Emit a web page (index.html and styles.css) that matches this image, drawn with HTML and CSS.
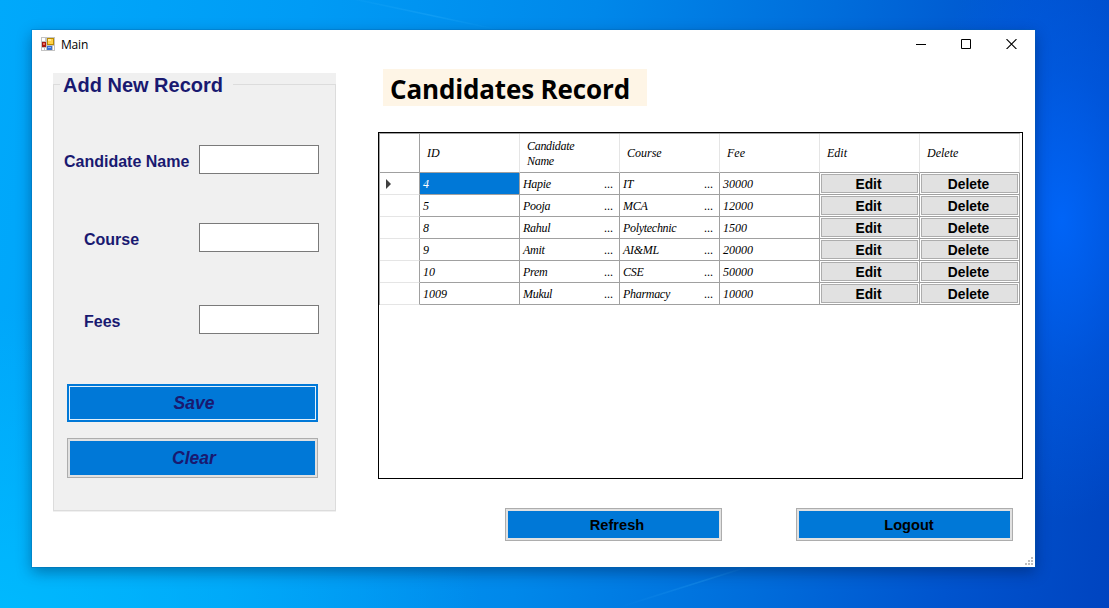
FILE: index.html
```html
<!DOCTYPE html>
<html lang="en">
<head>
<meta charset="utf-8">
<title>Main</title>
<link rel="stylesheet" href="styles.css">
</head>
<body>
<svg class="wallpaper" viewBox="0 0 1109 608" aria-hidden="true">
  <defs>
    <linearGradient id="ray" x1="0" x2="1"><stop offset="0" stop-color="#4bc0ff" stop-opacity="0"/><stop offset=".6" stop-color="#4bc0ff" stop-opacity=".2"/><stop offset="1" stop-color="#4bc0ff" stop-opacity="0"/></linearGradient>
  </defs>
  <path d="M330-6L500 30" stroke="url(#ray)" stroke-width="1.5"/>
  <path d="M620 607L760 563" stroke="url(#ray)" stroke-width="1.5"/>
</svg>
<main class="window">
  <header class="titlebar">
    <svg class="app-icon" width="14" height="14" viewBox="0 0 14 14">
      <path fill="#c3c3c3" d="M0 0h14v14H0z"/>
      <path fill="#fff" d="M1 1h3v3H1zM1 11h2v2H1zM4 11h1v2H4zM12 9h1v4h-1z"/>
      <path fill="#a51a12" d="M1 5h4v5H1z"/><path fill="#ef6a5a" d="M2 6h2v2H2z"/>
      <path fill="#b98a00" d="M6 1h7v7H6z"/><path fill="#ffd24a" d="M7 2h5v5H7z"/><path fill="#ffe99a" d="M7 2h3v2H7z"/>
      <path fill="#3a6fd0" d="M6 9h5v4H6z"/><path fill="#86b4f8" d="M7 10h3v1H7z"/>
    </svg>
    <span class="title">Main</span>
    <nav class="controls">
      <svg width="10" height="10" viewBox="0 0 10 10"><path d="M0 5h10v1H0z"/></svg>
      <svg width="10" height="10" viewBox="0 0 10 10"><path d="M.5.5h9v9h-9z" fill="none" stroke="#000"/></svg>
      <svg width="11" height="10" viewBox="0 0 11 10"><path d="M.5.1l10 10M10.5.1l-10 10" fill="none" stroke="#000" stroke-width="1.1"/></svg>
    </nav>
  </header>
  <div class="content">
    <section class="panel">
      <fieldset class="group">
        <legend>Add New Record</legend>
        <div class="field"><label class="wide" for="name">Candidate Name</label><input id="name"></div>
        <div class="field"><label for="course">Course</label><input id="course"></div>
        <div class="field last"><label for="fees">Fees</label><input id="fees"></div>
        <button class="btn form-btn focused">Save</button>
        <button class="btn form-btn clear">Clear</button>
      </fieldset>
    </section>
    <section class="records">
      <h1>Candidates Record</h1>
      <div class="grid-view">
        <div class="row head"><span></span><span>ID</span><span class="text">Candidate Name</span><span>Course</span><span>Fee</span><span>Edit</span><span>Delete</span></div>
        <div class="row"><span class="marker"><i></i></span><span class="selected">4</span><span class="text">Hapie<b>...</b></span><span class="text">IT<b>...</b></span><span>30000</span><span class="action"><button>Edit</button></span><span class="action"><button>Delete</button></span></div>
        <div class="row"><span></span><span>5</span><span class="text">Pooja<b>...</b></span><span class="text">MCA<b>...</b></span><span>12000</span><span class="action"><button>Edit</button></span><span class="action"><button>Delete</button></span></div>
        <div class="row"><span></span><span>8</span><span class="text">Rahul<b>...</b></span><span class="text">Polytechnic<b>...</b></span><span>1500</span><span class="action"><button>Edit</button></span><span class="action"><button>Delete</button></span></div>
        <div class="row"><span></span><span>9</span><span class="text">Amit<b>...</b></span><span class="text">AI&amp;ML<b>...</b></span><span>20000</span><span class="action"><button>Edit</button></span><span class="action"><button>Delete</button></span></div>
        <div class="row"><span></span><span>10</span><span class="text">Prem<b>...</b></span><span class="text">CSE<b>...</b></span><span>50000</span><span class="action"><button>Edit</button></span><span class="action"><button>Delete</button></span></div>
        <div class="row"><span></span><span>1009</span><span class="text">Mukul<b>...</b></span><span class="text">Pharmacy<b>...</b></span><span>10000</span><span class="action"><button>Edit</button></span><span class="action"><button>Delete</button></span></div>
      </div>
      <div class="footer"><button class="btn">Refresh</button><button class="btn logout">Logout</button></div>
    </section>
  </div>
  <svg class="grip" width="8" height="8" viewBox="0 0 8 8"><path fill="#bfbfbf" d="M6 0h2v2H6zM3 3h2v2H3zM6 3h2v2H6zM0 6h2v2H0zM3 6h2v2H3zM6 6h2v2H6z"/></svg>
</main>
</body>
</html>
```
FILE: styles.css
```css
* { box-sizing: border-box; }

body {
  margin: 0;
  height: 608px;
  overflow: hidden;
  padding: 30px 0 0 32px;
  font-family: "Liberation Sans", Arial, sans-serif;
  color: #000;
  background:
    radial-gradient(ellipse 150px 300px at 1062px 220px, rgba(0, 104, 255, .85), rgba(0, 98, 245, .4) 50%, transparent),
    radial-gradient(ellipse 480px 300px at 0 608px, rgba(0, 190, 255, .8), transparent),
    linear-gradient(98deg, #00a9fb 0, #009bf5 26%, #0088ea 50%, #006ddb 70%, #0054ce 86%, #0044c0 100%);
}

.wallpaper { position: absolute; inset: 0; width: 1109px; height: 608px; }

.window {
  position: relative;
  width: 1003px;
  height: 537px;
  background: #fff;
  box-shadow: 0 0 0 1px rgba(0, 100, 170, .3), 0 5px 14px rgba(0, 20, 60, .4);
}

.titlebar { display: flex; align-items: center; height: 29px; padding: 0 18px 0 9px; }
.app-icon { margin-top: -1px; }
.title { margin-left: 6px; font: 12px "Open Sans", "Noto Sans", sans-serif; letter-spacing: -.2px; }
.controls { display: flex; align-items: center; gap: 35px; margin: -1px 0 0 auto; }

.content { display: flex; padding: 10px 12px 0 21px; }

.panel { width: 283px; height: 439px; margin-top: 4px; background: #f0f0f0; }
.group { height: 438px; margin: 0; padding: 0; border: 1px solid #dcdcdc; }
.group legend {
  width: 173px;
  height: 23px;
  margin-left: 6px;
  padding: 0 0 0 3px;
  font-size: 20px;
  font-weight: bold;
  line-height: 24px;
  color: #191970;
  white-space: nowrap;
}
.field { display: flex; height: 29px; margin: 49px 16px 0 30px; }
.field.last { margin-top: 53px; }
.field label { width: 115px; padding-top: 7px; font-size: 16px; font-weight: bold; line-height: 19px; color: #191970; white-space: nowrap; }
.field label.wide { width: 135px; margin-left: -20px; }
.field input { width: 120px; height: 29px; border: 1px solid #7a7a7a; background: #fff; padding: 2px; }

.btn {
  display: block;
  width: 217px;
  height: 33px;
  padding: 0 0 0 7px;
  border: 1px solid #adadad;
  background: #0078d7;
  box-shadow: inset 0 0 0 2px #e1e1e1;
  font: bold 14.6px "Liberation Sans", Arial, sans-serif;
  color: #000;
}
.btn.logout { padding-left: 9px; }
.form-btn { width: 251px; height: 40px; margin: 16px 0 0 13px; padding: 0 0 0 3px; font-size: 17.5px; font-style: italic; color: #191970; }
.form-btn.focused { height: 38px; margin-top: 50px; border: 2px solid #0078d7; box-shadow: inset 0 0 0 1px #e1f0fb; }

.records { width: 645px; margin-left: 42px; }
h1 {
  width: 264px;
  height: 37px;
  margin: 0 0 26px 5px;
  padding-left: 7px;
  background: #fef5e6;
  font: bold 26px/41px "Open Sans", "Noto Sans", sans-serif;
  letter-spacing: -.15px;
  white-space: nowrap;
}

.grid-view { height: 347px; border: 1px solid #000; font: italic 12px/15px "Liberation Serif", "Times New Roman", serif; }
.row { display: grid; grid-template-columns: 40px repeat(6, 100px); width: 641px; height: 22px; border-left: 1px solid #a0a0a0; }
.row > span { display: flex; align-items: center; justify-content: space-between; padding: 2px 6px 0 3px; border-right: 1px solid #a0a0a0; border-bottom: 1px solid #a0a0a0; }
.row > span:first-child { padding: 0; border-bottom-color: #e5e5e5; }
.row.head { height: 40px; border-top: 1px solid #a0a0a0; }
.row.head > span { padding: 1px 30px 0 7px; border-right-color: #e5e5e5; }
.row.head > span:first-child { border-right-color: #a0a0a0; border-bottom-color: #a0a0a0; }
.row > .text { letter-spacing: -.3px; }
.row b { font-weight: normal; font-style: normal; letter-spacing: 0; }
.row .selected { background: #0078d7; color: #fff; }
.marker i { margin-left: 6px; border-left: 5px solid #404040; border-top: 5px solid transparent; border-bottom: 5px solid transparent; }
.row > .action { padding: 1px; }
.action button { width: 97px; height: 19px; padding: 2px 2px 0 0; border: 1px solid #adadad; background: #e1e1e1; font: bold 13.8px/15px "Liberation Sans", Arial, sans-serif; color: #000; }

.footer { display: flex; gap: 74px; margin: 29px 0 0 127px; }
.grip { position: absolute; right: 2px; bottom: 2px; }
```
